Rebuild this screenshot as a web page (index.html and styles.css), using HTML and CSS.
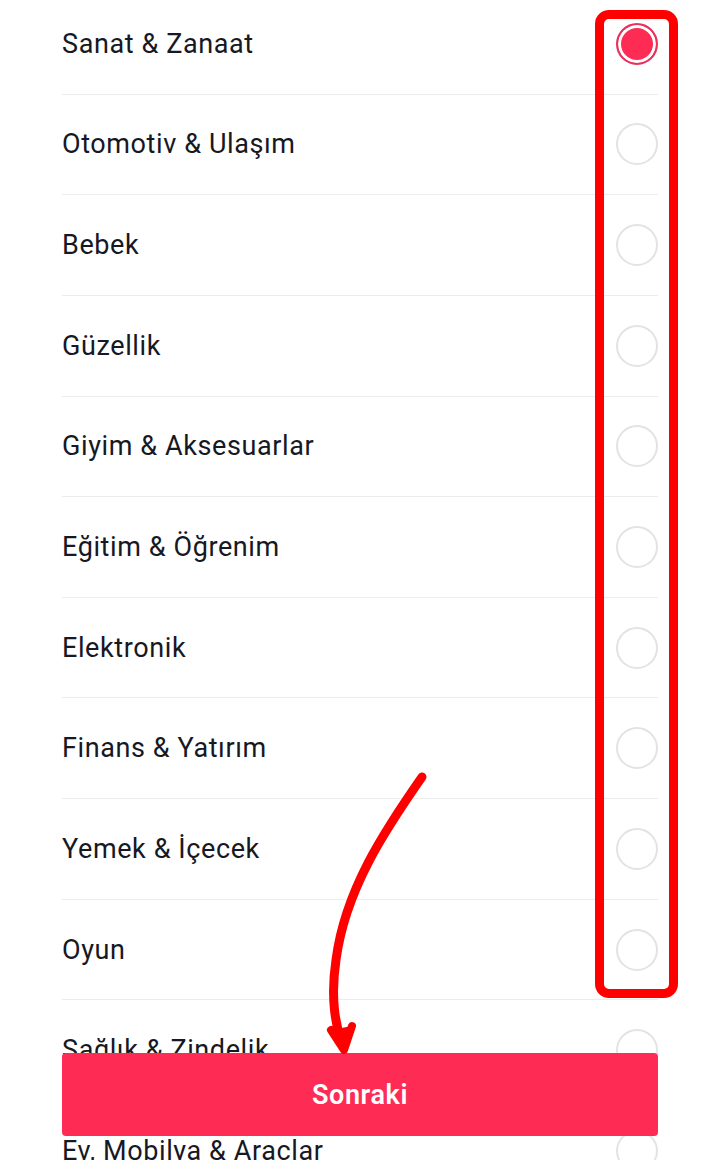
FILE: index.html
```html
<!DOCTYPE html>
<html lang="tr">
<head>
<meta charset="utf-8">
<link rel="stylesheet" href="styles.css">
</head>
<body>
<div class="page">
  <ul class="list">
    <li class="row"><span class="label">Sanat &amp; Zanaat</span><span class="radio checked"></span></li>
    <li class="row"><span class="label">Otomotiv &amp; Ulaşım</span><span class="radio"></span></li>
    <li class="row"><span class="label">Bebek</span><span class="radio"></span></li>
    <li class="row"><span class="label">Güzellik</span><span class="radio"></span></li>
    <li class="row"><span class="label">Giyim &amp; Aksesuarlar</span><span class="radio"></span></li>
    <li class="row"><span class="label">Eğitim &amp; Öğrenim</span><span class="radio"></span></li>
    <li class="row"><span class="label">Elektronik</span><span class="radio"></span></li>
    <li class="row"><span class="label">Finans &amp; Yatırım</span><span class="radio"></span></li>
    <li class="row"><span class="label">Yemek &amp; İçecek</span><span class="radio"></span></li>
    <li class="row"><span class="label">Oyun</span><span class="radio"></span></li>
    <li class="row"><span class="label">Sağlık &amp; Zindelik</span><span class="radio"></span></li>
    <li class="row"><span class="label">Ev, Mobilya &amp; Araçlar</span><span class="radio"></span></li>
  </ul>
  <button class="next">Sonraki</button>
  <div class="highlight"></div>
  <svg class="arrow" width="720" height="1160" viewBox="0 0 720 1160">
    <path d="M422 777 C 385 830, 345 890, 336 960 C 330 1000, 336 1025, 342 1045" fill="none" stroke="#ff0000" stroke-width="9" stroke-linecap="round"/>
    <path d="M331 1030 L 344 1050 L 352 1026" fill="#ff0000" stroke="#ff0000" stroke-width="8" stroke-linejoin="round" stroke-linecap="round"/>
  </svg>
</div>
</body>
</html>
```

FILE: styles.css
```css
html, body {
  margin: 0;
  padding: 0;
  background: #ffffff;
}
.page {
  position: relative;
  width: 720px;
  height: 1160px;
  overflow: hidden;
  font-family: Roboto, "Noto Sans", sans-serif;
}
.list {
  list-style: none;
  margin: -6px 0 0 0;
  padding: 0 62px;
}
.row {
  display: flex;
  align-items: center;
  justify-content: space-between;
  height: 99.65px;
  border-bottom: 1px solid #ececec;
}
.label {
  font-size: 27px;
  color: #161823;
  letter-spacing: 0.6px;
}
.radio {
  width: 38px;
  height: 38px;
  border-radius: 50%;
  border: 2px solid #e3e3e3;
  box-sizing: content-box;
}
.radio.checked {
  border-color: #e8305a;
  background: #fe2c55;
  box-shadow: inset 0 0 0 3px #ffffff;
}
.next {
  position: absolute;
  left: 62px;
  top: 1053px;
  width: 596px;
  height: 83px;
  border: 0;
  border-radius: 4px;
  background: #fe2c55;
  color: #ffffff;
  font-family: Roboto, "Noto Sans", sans-serif;
  font-weight: 600;
  font-size: 27px;
  letter-spacing: 0.6px;
}
.highlight {
  position: absolute;
  left: 595px;
  top: 10px;
  width: 83px;
  height: 988px;
  box-sizing: border-box;
  border: 9px solid #ff0000;
  border-radius: 14px;
}
.arrow {
  position: absolute;
  left: 0;
  top: 0;
}
```
